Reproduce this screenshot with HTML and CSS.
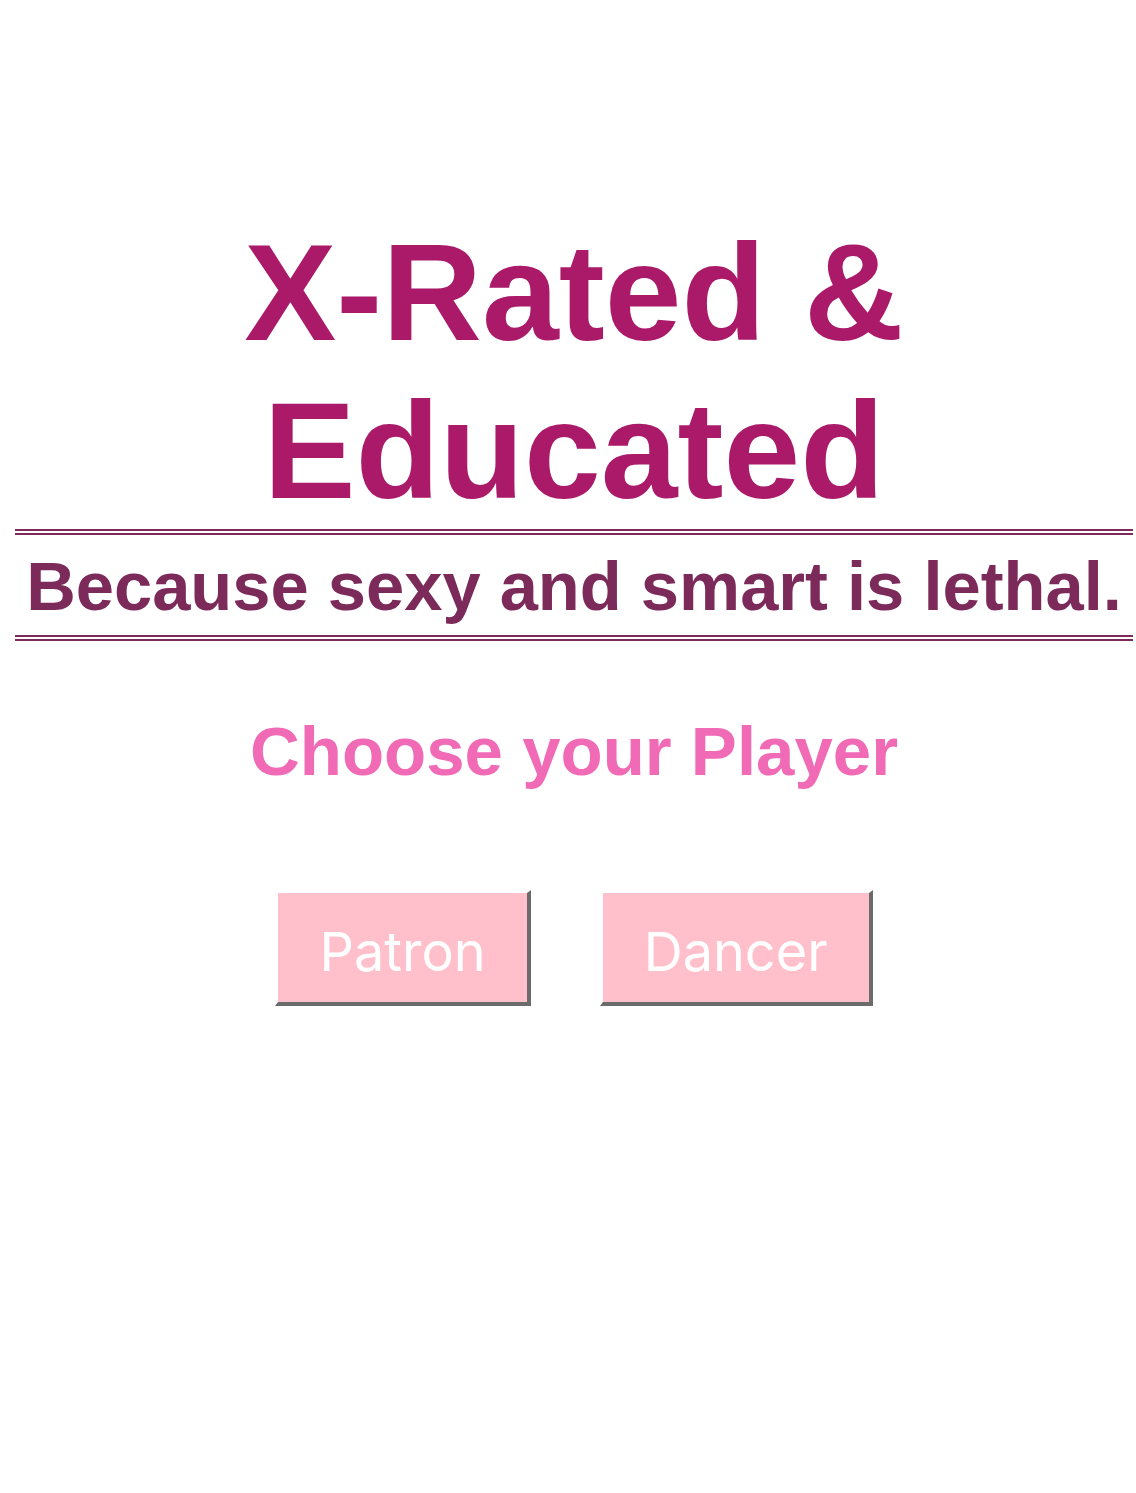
FILE: index.html
```html
<!DOCTYPE html>
<html lang="en">
<head>
<meta charset="utf-8">
<title>X-Rated &amp; Educated</title>
<link rel="stylesheet" href="styles.css">
</head>
<body>
<main class="page">
  <h1 class="title">X-Rated &amp;<br>Educated</h1>
  <h2 class="tagline">Because sexy and smart is lethal.</h2>
  <h3 class="choose">Choose your Player</h3>
  <div class="players">
    <button class="player" type="button">Patron</button>
    <button class="player" type="button">Dancer</button>
  </div>
</main>
</body>
</html>
```

FILE: styles.css
```css
html, body {
  margin: 0;
  padding: 0;
  background: #ffffff;
}

.page {
  margin-left: 15px;
  width: 1118px;
  font-family: "Liberation Sans", Arial, Helvetica, sans-serif;
  text-align: center;
}

.title {
  margin: 213px 0 0;
  font-size: 138px;
  line-height: 158px;
  font-weight: 700;
  color: #aa1a69;
}

.tagline {
  margin: 0;
  padding: 12px 0 9px;
  border-top: 6px double #7b2a5a;
  border-bottom: 6px double #7b2a5a;
  font-size: 68.7px;
  line-height: 79px;
  font-weight: 700;
  color: #7b2a5a;
  white-space: nowrap;
}

.choose {
  margin: 71px 0 0;
  font-size: 69px;
  line-height: 79px;
  font-weight: 700;
  color: #f06ab6;
}

.players {
  display: flex;
  justify-content: center;
  gap: 69px;
  margin-top: 99px;
}

.player {
  font-family: Inter, "Liberation Sans", Arial, sans-serif;
  font-size: 54px;
  line-height: 62px;
  font-weight: 400;
  color: #ffffff;
  background: #ffc0cb;
  padding: 28px 41px 19px;
  border-style: solid;
  border-width: 3px 4px 4px 3px;
  border-color: #ffffff #6b6b6b #6b6b6b #ffffff;
  margin: 0;
}
```
